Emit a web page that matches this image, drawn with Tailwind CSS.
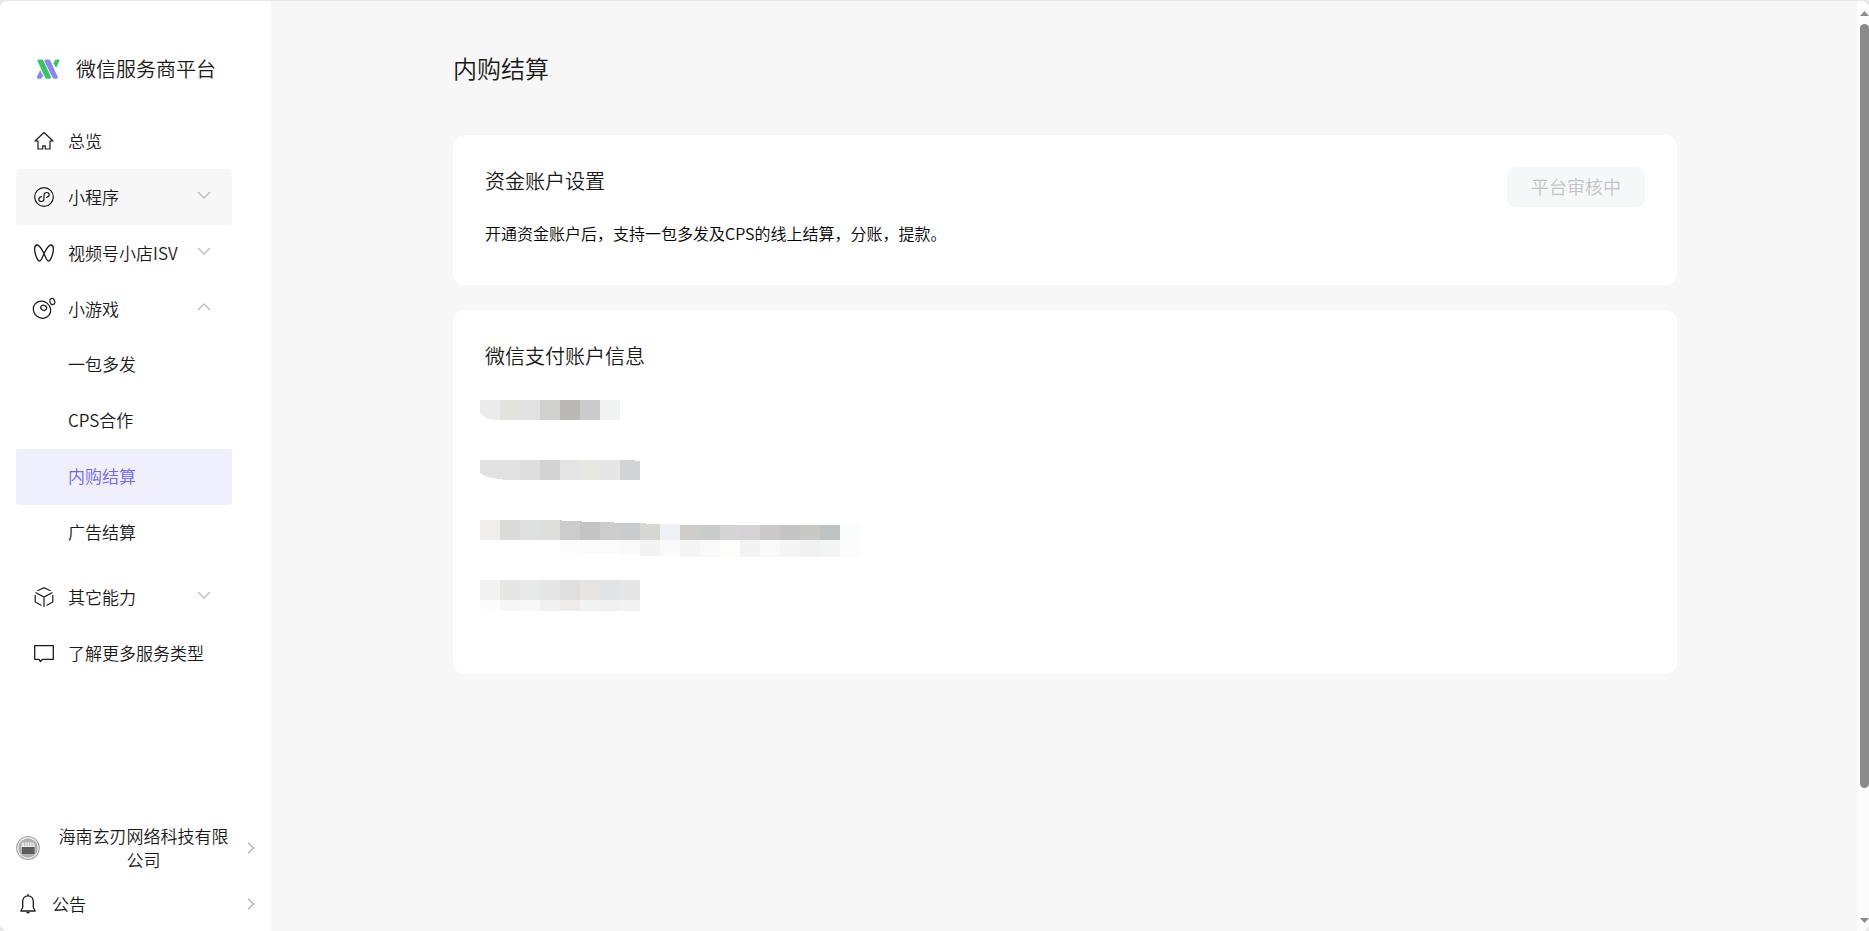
<!DOCTYPE html>
<html lang="zh-CN">
  <head>
    <meta charset="UTF-8" />
    <meta name="viewport" content="width=device-width, initial-scale=1.0" />
    <title>微信服务商平台</title>
    <script src="https://cdn.jsdelivr.net/npm/@tailwindcss/browser@4"></script>
  </head>
  <body class="bg-[#e8e8e8] font-['Noto_Sans_CJK_SC',sans-serif] font-[350] text-[#1a1a1a]">
    <div class="h-screen pt-px">
      <div class="flex h-full overflow-hidden rounded-lg bg-[#f7f7f7]">
        <!-- Sidebar -->
        <aside class="flex w-[271px] shrink-0 flex-col bg-white text-[17px] leading-6">
          <a href="#" class="mt-6 flex h-22 items-center pl-9 text-[20px]">
            <svg class="mr-4 h-5 w-6" viewBox="0 0 24 20">
              <path d="M1 17.600 4.200 11.200l2.900 5.300-.9 1.900Q5.500 19.700 4.200 19.700H1.800Q.2 19.500 1 17.600z" fill="#8b86f5" />
              <path d="M17.400 4.200 19 1.300q.5-.9 1.600-.9h2q1.300.1.700 1.500L20.200 8.900z" fill="#37c463" />
              <path d="M9.200.4h3.200q1.300 0 2 1.300l7.300 16q.6 1.900-.9 2h-2.200q-1.400 0-2.100-1.300L8.600 2.500Q8 .9 9.200.4z" fill="#8b86f5" />
              <path d="M2.300.4h3.200q1.300 0 2 1.300l7.300 16q.6 1.900-.9 2h-2.700q-1.400 0-2.100-1.300L1.700 2.500Q1.100.9 2.300.4z" fill="#37c463" />
            </svg>
            微信服务商平台
          </a>

          <nav class="flex flex-col px-4 pr-[39px]">
            <a href="#" class="flex h-14 items-center rounded px-[18px]">
              <svg class="mr-3.5 size-5" viewBox="0 0 20 20" fill="none" stroke="currentColor" stroke-width="1.2" stroke-linejoin="round">
                <path d="M10 1.500 1 10h3v8h4.700v-3.200h2.600V18H16v-8h3z" />
              </svg>
              总览
            </a>
            <button class="flex h-14 items-center rounded bg-[#f7f7f7] px-[18px]">
              <svg class="mr-3.5 size-5" viewBox="0 0 20 20" fill="none" stroke="currentColor" stroke-width="1.2" stroke-linecap="round">
                <circle cx="10" cy="10" r="9.300" />
                <path d="M7.500 9.600C5.800 10 4.800 11 4.800 12.300c0 1.300 1 2.200 2.400 2.200 1.700 0 2.800-1.200 2.800-2.700V8.200c0-1.500 1.100-2.700 2.800-2.700 1.400 0 2.400.9 2.400 2.200 0 1.300-1 2.300-2.700 2.700" />
              </svg>
              小程序
              <svg class="mr-[3px] mb-1 ml-auto h-2 w-3.5" viewBox="0 0 14 8" fill="none" stroke="#bbb" stroke-width="1.3"><path d="m1 1 6 6 6-6" /></svg>
            </button>
            <button class="flex h-14 items-center rounded px-[18px]">
              <svg class="mr-3.5 size-5" viewBox="0 0 20 20" fill="none" stroke="currentColor" stroke-width="1.3" stroke-linejoin="round">
                <path d="M10 10.500C8 6.500 5.500 2 3 2 .3 2-.1 7 1.800 12.500 3 16 4 18 5.500 18 7.500 18 8.500 13.800 10 10.500 12 6.500 14.500 2 17 2c2.700 0 3.100 5 1.200 10.500C17 16 16 18 14.500 18c-2 0-3-4.200-4.500-7.500z" />
              </svg>
              视频号小店ISV
              <svg class="mr-[3px] mb-1 ml-auto h-2 w-3.5" viewBox="0 0 14 8" fill="none" stroke="#bbb" stroke-width="1.3"><path d="m1 1 6 6 6-6" /></svg>
            </button>
            <button class="flex h-14 items-center rounded pr-[18px] pl-4">
              <svg class="mr-3 h-6 w-6" viewBox="0 0 24 24" fill="none" stroke="currentColor" stroke-width="1.2">
                <ellipse cx="10" cy="12.700" rx="9" ry="8.300" transform="rotate(40 10 12.700)" />
                <ellipse cx="11.700" cy="10.800" rx="3" ry="2.500" transform="rotate(25 11.700 10.800)" />
                <ellipse cx="20.300" cy="4.500" rx="2.400" ry="3.100" transform="rotate(-20 20.300 4.500)" />
              </svg>
              小游戏
              <svg class="mr-[3px] mb-1 ml-auto h-2 w-3.5" viewBox="0 0 14 8" fill="none" stroke="#bbb" stroke-width="1.3"><path d="m1 7 6-6 6 6" /></svg>
            </button>
            <a href="#" class="flex h-14 items-center rounded pb-0.5 pl-[52px]">一包多发</a>
            <a href="#" class="flex h-14 items-center rounded pb-0.5 pl-[52px]">CPS合作</a>
            <a href="#" class="flex h-14 items-center rounded bg-[#f0effd] pb-0.5 pl-[52px] text-[#7068f3]">内购结算</a>
            <a href="#" class="mb-2 flex h-14 items-center rounded pb-0.5 pl-[52px]">广告结算</a>
            <button class="flex h-14 items-center rounded px-[18px]">
              <svg class="mr-3.5 size-5" viewBox="0 0 20 20" fill="none" stroke="currentColor" stroke-width="1.2">
                <path d="M3.500 3.700 10 .7l6.500 3M1.500 5.500 10 10l8.500-4.500M10 10v10M1.200 8v7L7.500 18.500M18.800 8v7l-6.300 3.500" />
              </svg>
              其它能力
              <svg class="mr-[3px] mb-1 ml-auto h-2 w-3.5" viewBox="0 0 14 8" fill="none" stroke="#bbb" stroke-width="1.3"><path d="m1 1 6 6 6-6" /></svg>
            </button>
            <a href="#" class="flex h-14 items-center rounded px-[18px]">
              <svg class="mr-3.5 size-5" viewBox="0 0 20 20" fill="none" stroke="currentColor" stroke-width="1.3" stroke-linejoin="round">
                <path d="M.7 2.700h18.600v13.600H8.700L6.300 18.500 5 16.300H.7z" />
              </svg>
              了解更多服务类型
            </a>
          </nav>

          <div class="mt-auto -mb-px flex flex-col px-4">
            <button class="flex h-14 items-center">
              <svg class="size-6 shrink-0" viewBox="0 0 24 24">
                <circle cx="12" cy="12" r="11.300" fill="#fff" stroke="#aaa" stroke-width="1.300" />
                <circle cx="12" cy="12" r="9.800" fill="#b0b0b0" />
                <path d="M6.500 6.500h11L19 11H5z" fill="#e8e8e8" />
                <path d="M8.500 7v3M11 7v3M13.500 7v3M16 7v3" stroke="#aaa" stroke-width=".7" />
                <rect x="6" y="11" width="12.500" height="7" fill="#5c5c5c" />
              </svg>
              <span class="flex-1 px-4">海南玄刃网络科技有限公司</span>
              <svg class="h-3 w-2 shrink-0" viewBox="0 0 8 12" fill="none" stroke="#b2b2b2" stroke-width="1.300"><path d="m1 .7 5.500 5.300L1 11.300" /></svg>
            </button>
            <button class="flex h-14 items-center">
              <svg class="mr-3 h-5 w-6" viewBox="0 0 24 20" fill="none" stroke="currentColor" stroke-width="1.300" stroke-linejoin="round">
                <path d="M12 1.800c-3.300 0-5.300 2.300-5.300 5.500v6.200L4.800 17h14.400l-1.900-3.500V7.300c0-3.200-2-5.500-5.300-5.500zM12 0v2M10.500 18.700h3" />
              </svg>
              公告
              <svg class="ml-auto h-3 w-2" viewBox="0 0 8 12" fill="none" stroke="#b2b2b2" stroke-width="1.300"><path d="m1 .7 5.500 5.300L1 11.300" /></svg>
            </button>
          </div>
        </aside>

        <!-- Content -->
        <main class="min-w-0 flex-1 pt-[51px] pr-8 pl-[34px]">
          <div class="mx-auto max-w-[1224px]">
            <h1 class="text-[24px] leading-8">内购结算</h1>

            <section class="mt-[51px] flex items-start justify-between rounded-xl bg-white px-8 pt-8 pb-10">
              <div>
                <h2 class="text-[20px] leading-7">资金账户设置</h2>
                <p class="mt-[26px] text-[16px] leading-6 text-black">开通资金账户后，支持一包多发及CPS的线上结算，分账，提款。</p>
              </div>
              <button disabled class="h-10 rounded-lg bg-[#f6f7f9] px-6 pb-0.5 text-[18px] text-[#c4c4c4]">平台审核中</button>
            </section>

            <section class="mt-[25px] rounded-xl bg-white px-8 pt-8 pb-[34px]">
              <h2 class="text-[20px] leading-7">微信支付账户信息</h2>
              <!-- Masked account details -->
              <ul class="-ml-[5px] mt-[30px]">
                <li class="h-15">
                  <svg width="140" height="20" shape-rendering="crispEdges">
                    <path d="M0 0h20v20h-8Q3 18 0 12z" fill="#ebebeb" />
                    <path d="M20 0h20v20H20z" fill="#e2e2df" />
                    <path d="M40 0h20v20H40z" fill="#e1e1e1" />
                    <path d="M60 0h20v20H60z" fill="#d1d1cf" />
                    <path d="M80 0h20v20H80z" fill="#bab9b5" />
                    <path d="M100 0h20v20h-20z" fill="#cbcbcd" />
                    <path d="M120 0h20v20h-20z" fill="#f2f4f3" />
                  </svg>
                </li>
                <li class="h-15">
                  <svg width="160" height="20" shape-rendering="crispEdges">
                    <path d="M0 0h40v20H29Q8 19 0 13z" fill="#e1e1e1" />
                    <path d="M40 0h20v20H40z" fill="#dedede" />
                    <path d="M60 0h20v20H60z" fill="#d3d3d3" />
                    <path d="M80 0h20v20H80z" fill="#e5e5e5" />
                    <path d="M100 0h20v20h-20z" fill="#e7e7e4" />
                    <path d="M120 0h20v20h-20z" fill="#e6e6e6" />
                    <path d="M140 0h15v1h5v19h-20z" fill="#d2d3d5" />
                  </svg>
                </li>
                <li class="h-15">
                  <svg width="380" height="37" shape-rendering="crispEdges">
                    <path d="M0 0h20v20H0z" fill="#efeeec" />
                    <path d="M20 0h20v20H20z" fill="#dadad8" />
                    <path d="M40 0h20v20H40z" fill="#dde0df" />
                    <path d="M60 0h20v20H60z" fill="#dededd" />
                    <path d="M80 0h2v1h18v19H80z" fill="#cccccc" />
                    <path d="M100 1h2v1h18v18h-20z" fill="#c4c4c4" />
                    <path d="M120 2h14v1h6v17h-20z" fill="#cccccc" />
                    <path d="M140 3h20v17h-20z" fill="#cacbcd" />
                    <path d="M160 3h6v1h14v16h-20z" fill="#d6d6d3" />
                    <path d="M180 4h20v16h-20z" fill="#eff0f3" />
                    <path d="M200 5h20v15h-20z" fill="#cfcdcb" />
                    <path d="M220 5h20v15h-20z" fill="#cacccb" />
                    <path d="M240 5h20v15h-20z" fill="#d5d5d6" />
                    <path d="M260 5h20v15h-20z" fill="#d5d3d6" />
                    <path d="M280 5h20v15h-20z" fill="#cac8c9" />
                    <path d="M300 5h20v15h-20z" fill="#c4c4c4" />
                    <path d="M320 5h20v15h-20z" fill="#c8c8c5" />
                    <path d="M340 5h20v15h-20z" fill="#bec2c3" />
                    <path d="M360 5h20v15h-20z" fill="#fafcfb" />
                    <path d="M80 20h60v14h-38v-1H80z" fill="#fbfbfb" />
                    <path d="M140 20h20v15h-20z" fill="#f9f9f9" />
                    <path d="M160 20h20v16h-20z" fill="#f3f3f3" />
                    <path d="M180 20h20v16h-20z" fill="#fafafa" />
                    <path d="M200 20h20v17h-20z" fill="#f5f5f5" />
                    <path d="M220 20h20v17h-20z" fill="#f9f9f9" />
                    <path d="M240 20h20v17h-20z" fill="#fdfdfb" />
                    <path d="M260 20h20v17h-20z" fill="#f3f3f3" />
                    <path d="M280 20h20v17h-20z" fill="#f9f9f9" />
                    <path d="M300 20h20v17h-20z" fill="#f5f5f5" />
                    <path d="M320 20h20v17h-20z" fill="#f1f1f1" />
                    <path d="M340 20h20v17h-20z" fill="#f3f5f4" />
                    <path d="M360 20h20v17h-20z" fill="#fbfbfb" />
                  </svg>
                </li>
                <li class="h-15">
                  <svg width="160" height="31" shape-rendering="crispEdges">
                    <path d="M0 0h20v20H0z" fill="#f2f2f2" />
                    <path d="M20 0h20v20H20z" fill="#e6e6e4" />
                    <path d="M40 0h20v20H40z" fill="#e8eae9" />
                    <path d="M60 0h20v20H60z" fill="#e6e6e6" />
                    <path d="M80 0h20v20H80z" fill="#dfdfdf" />
                    <path d="M100 0h20v20h-20z" fill="#e7e5e3" />
                    <path d="M120 0h20v20h-20z" fill="#e2e3e5" />
                    <path d="M140 0h20v20h-20z" fill="#e6e6e6" />
                    <path d="M0 20h20v11H4v-1H0z" fill="#fcfcfc" />
                    <path d="M20 20h20v11H20z" fill="#f6f6f6" />
                    <path d="M40 20h20v11H40z" fill="#f8f8f8" />
                    <path d="M60 20h20v11H60z" fill="#f1f1f1" />
                    <path d="M80 20h20v11H80z" fill="#eeecea" />
                    <path d="M100 20h20v11h-20z" fill="#f1f4f3" />
                    <path d="M120 20h20v11h-20z" fill="#f0f0f0" />
                    <path d="M140 20h20v11h-20z" fill="#f3f3f3" />
                  </svg>
                </li>
              </ul>
            </section>
          </div>
        </main>

        <!-- Scrollbar -->
        <div class="flex w-3 shrink-0 flex-col bg-[#fcfcfc] pt-2.5 pb-2 pl-[3px]">
          <svg class="h-[5px] w-[9px]" viewBox="0 0 9 5" fill="#8b8b8b"><path d="M4.500 0 9 5H0z" /></svg>
          <div class="mt-2 flex flex-1 flex-col">
            <div class="rounded-full bg-[#8b8b8b]" style="height: 85.5%"></div>
          </div>
          <svg class="h-[5px] w-[9px]" viewBox="0 0 9 5" fill="#8b8b8b"><path d="M0 0h9L4.500 5z" /></svg>
        </div>
      </div>
    </div>
  </body>
</html>
